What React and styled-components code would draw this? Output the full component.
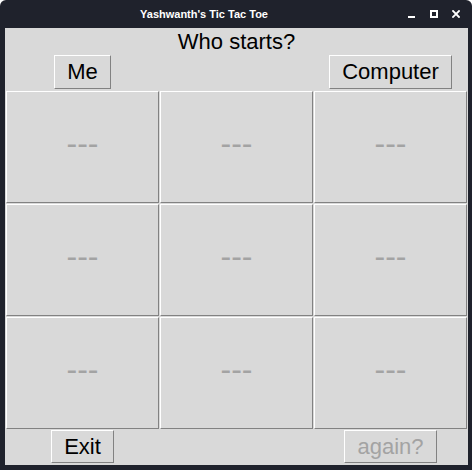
import React from 'react';
import styled, { createGlobalStyle } from 'styled-components';

const GlobalStyle = createGlobalStyle`
  html, body {
    margin: 0;
    padding: 0;
    background: #ffffff;
  }
  body {
    font-family: "Liberation Sans", Arial, sans-serif;
  }
`;

const App = () => {
  const cells = Array.from({ length: 9 });

  return (
    <>
      <GlobalStyle />
      <Window>
        <TitleBar>
          <Title>Yashwanth's Tic Tac Toe</Title>
          <Controls>
            <svg width="8" height="8" viewBox="0 0 8 8">
              <rect x="0" y="6" width="7" height="2" fill="#ffffff" />
            </svg>
            <svg width="8" height="8" viewBox="0 0 8 8">
              <rect x="1" y="1" width="6" height="6" fill="none" stroke="#ffffff" strokeWidth="2" />
            </svg>
            <svg width="8" height="8" viewBox="0 0 8 8">
              <path d="M1 1 L7 7 M7 1 L1 7" stroke="#ffffff" strokeWidth="1.8" strokeLinecap="square" />
            </svg>
          </Controls>
        </TitleBar>

        <Content>
          <Row $height={27}>
            <Heading $col={2}>Who starts?</Heading>
          </Row>
          <Row $height={34}>
            <Button $col={1}>Me</Button>
            <Button $col={3}>Computer</Button>
          </Row>

          <Board>
            {cells.map((_, i) => (
              <Cell key={i}>---</Cell>
            ))}
          </Board>

          <Row $height={33} $top={1}>
            <Button $col={1}>Exit</Button>
            <Button $col={3} disabled>
              again?
            </Button>
          </Row>
        </Content>
      </Window>
    </>
  );
};

export default App;

const Window = styled.div`
  width: 472px;
  height: 470px;
  background-color: #1f222c;
  border-radius: 6px 6px 0 0;
  display: flex;
  flex-direction: column;
  overflow: hidden;
`;

const TitleBar = styled.div`
  height: 28px;
  display: flex;
  align-items: center;
  flex-shrink: 0;
`;

const Title = styled.div`
  flex: 1;
  text-align: center;
  color: #ffffff;
  font-size: 11px;
  font-weight: 700;
  line-height: 28px;
`;

const Controls = styled.div`
  display: flex;
  align-items: center;
  gap: 14px;
  padding-right: 12px;

  svg {
    display: block;
  }
`;

const Content = styled.div`
  margin: 0 4px 0 5px;
  height: 437px;
  background-color: #d9d9d9;
  padding: 0 1px 2px;
  box-sizing: border-box;
  display: flex;
  flex-direction: column;
`;

const Row = styled.div`
  display: grid;
  grid-template-columns: repeat(3, 1fr);
  column-gap: 1px;
  height: ${(p) => p.$height}px;
  margin-top: ${(p) => p.$top || 0}px;
  justify-items: center;
  align-items: stretch;
`;

const Heading = styled.div`
  grid-column: ${(p) => p.$col};
  font-size: 22px;
  line-height: 27px;
  color: #000000;
  white-space: nowrap;
`;

const Button = styled.button`
  grid-column: ${(p) => p.$col};
  font-family: "Liberation Sans", Arial, sans-serif;
  font-size: 22px;
  color: #000000;
  background-color: #d9d9d9;
  padding: 0 12px;
  margin: 0;
  border: 1px solid;
  border-color: #ffffff #828282 #828282 #ffffff;
  border-radius: 0;
  cursor: pointer;

  &:disabled {
    color: #a3a3a3;
    cursor: default;
  }
`;

const Board = styled.div`
  display: grid;
  grid-template-columns: repeat(3, 1fr);
  grid-template-rows: repeat(3, 112px);
  gap: 1px;
  margin-top: 2px;
`;

const Cell = styled.div`
  display: flex;
  align-items: center;
  justify-content: center;
  box-sizing: border-box;
  border: 1px solid;
  border-color: #ffffff #828282 #828282 #ffffff;
  color: #a3a3a3;
  font-size: 32px;
  padding-bottom: 8px;
`;
